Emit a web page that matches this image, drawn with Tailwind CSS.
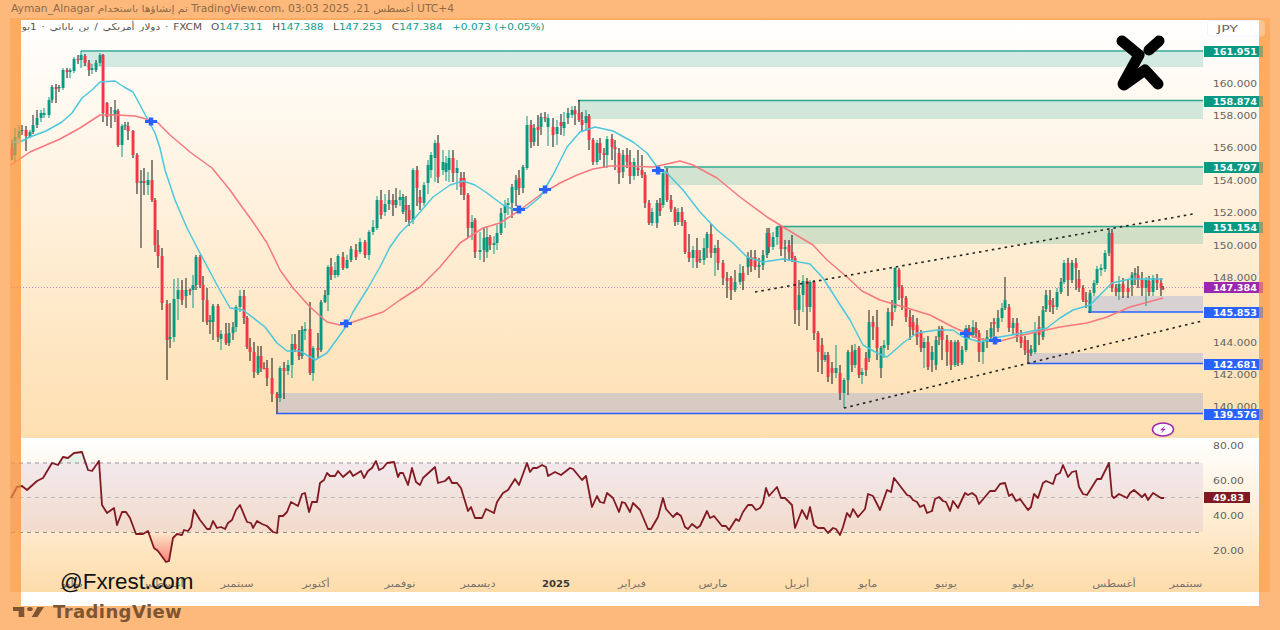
<!DOCTYPE html>
<html lang="ar">
<head>
<meta charset="utf-8">
<title>USDJPY</title>
<script src="https://cdn.jsdelivr.net/npm/@tailwindcss/browser@4"></script>
</head>
<body class="m-0 bg-[#fdb97b]">
<div class="relative w-[1280px] h-[630px] overflow-hidden flex flex-col bg-[#fdb97b] font-['DejaVu_Sans',sans-serif]">
  <!-- top band -->
  <div dir="ltr" class="h-[20px] shrink-0 pl-[11px] text-[10.7px] leading-[18px] text-[#8e6a48] whitespace-nowrap scale-y-[.9]">Ayman_Alnagar تم إنشاؤها باستخدام TradingView.com، 03:03 2025 ,21 أغسطس UTC+4</div>
  <!-- card -->
  <div class="mx-[21px] w-[1238px] h-[586px] shrink-0 bg-white flex flex-col">
    <div class="h-[418px] bg-linear-to-b from-white to-[#fedfb0]">
      <div dir="ltr" class="h-[12px] flex text-[10.5px] leading-[12px] whitespace-nowrap scale-y-[.9]">
        <div class="w-[181px] flex justify-end overflow-hidden text-[#55534f] [word-spacing:1.5px]"><span class="shrink-0">دولار أمريكي / ين ياباني · 1يوم · FXCM</span></div>
        <div class="ml-[9px] flex gap-[9.5px] text-[#0f9d89]">
          <span><span class="text-[#55534f]">O</span>147.311</span>
          <span><span class="text-[#55534f]">H</span>147.388</span>
          <span><span class="text-[#55534f]">L</span>147.253</span>
          <span><span class="text-[#55534f]">C</span>147.384</span>
          <span>+0.073 (+0.05%)</span>
        </div>
      </div>
    </div>
    <div class="h-[154px] bg-linear-to-b from-white to-[#fedcaa]"></div>
    <div class="h-[14px] bg-white"></div>
  </div>
  <!-- bottom band: TradingView mark -->
  <div class="flex items-center gap-[9px] pl-[13px] h-[12px] text-[#7d5532]">
    <svg class="w-[31px] h-[10px] fill-[#7d5532]" viewBox="2 6 33 15" preserveAspectRatio="none"><path d="M14 6H2v6h6v9h6V6Zm14 15h-6l6-15h7l-7 15Z"/><circle cx="20" cy="9" r="3"/></svg>
    <span class="text-[18px] leading-[12px] font-bold tracking-[.4px]">TradingView</span>
  </div>

  <!-- chart drawing -->
  <svg class="absolute left-0 top-0 w-[1280px] h-[630px]" viewBox="0 0 1280 630" fill="none">
    <defs>
      <linearGradient id="os" x1="0" y1="532" x2="0" y2="562" gradientUnits="userSpaceOnUse">
        <stop offset="0" stop-color="#f23645" stop-opacity="0"/>
        <stop offset="1" stop-color="#f23645" stop-opacity=".55"/>
      </linearGradient>
    </defs>
    <!-- zones -->
    <rect x="81" y="52" width="1122" height="15" fill="#089981" fill-opacity=".18"/>
    <rect x="578" y="101" width="625" height="18" fill="#089981" fill-opacity=".18"/>
    <rect x="664" y="168" width="539" height="17" fill="#089981" fill-opacity=".18"/>
    <rect x="777" y="227" width="426" height="17" fill="#089981" fill-opacity=".18"/>
    <rect x="1088" y="296" width="115" height="16" fill="#2962ff" fill-opacity=".18"/>
    <rect x="1028" y="353" width="175" height="10" fill="#2962ff" fill-opacity=".18"/>
    <rect x="276" y="393" width="927" height="20" fill="#2962ff" fill-opacity=".18"/>
    <path d="M81 51H1203M578 100.500H1203M664 167H1203M777 226.500H1203" stroke="#089981" stroke-opacity=".85" stroke-width="1.500"/>
    <path d="M1088 312H1203M1028 363.500H1203M276 413.500H1203" stroke="#2962ff" stroke-width="1.300"/>
    <!-- last price line -->
    <path d="M11 287.500H1203" stroke="#9c27b0" stroke-opacity=".55" stroke-dasharray="1 2"/>

    <g id="candles"></g>

    <!-- moving averages -->
    <polyline stroke="#f7787e" stroke-width="1.500" stroke-linejoin="round" points="11,165 30,152 60,139 80,128 100,115 117,115 135,116 157,122 170,135 190,152 212,168 230,190 237,200 253,222 267,243 280,270 293,288 310,307 327,322 340,325 353,322 383,312 400,300 420,287 440,267 460,243 483,228 500,223 520,210 540,195 560,183 577,175 593,169 610,166 627,166 653,167 667,164 680,161 693,165 717,178 740,197 767,217 793,233 813,245 827,260 847,277 862,291 880,300 907,308 930,315 953,327 977,338 997,342 1023,335 1060,327 1087,323 1107,317 1130,307 1163,298"/>
    <polyline stroke="#4cc8dc" stroke-width="1.500" stroke-linejoin="round" points="11,142 21,141.500 30,137 46,131 62,122 72,113 82,98 92,90 100,82 107,81.500 115,81 124,87 133,92 140,105 148,120 155,133 160,148 165,170 175,200 187,228 200,253 217,285 230,308 243,310 265,327 277,343 287,351 300,351 315,360 327,353 345,328 353,312 368,288 380,267 390,247 400,233 415,218 433,197 450,185 463,181 475,185 487,193 503,205 515,210 527,208 540,197 553,175 567,147 580,132 595,127 613,131 633,142 647,153 657,167 667,173 683,190 700,212 717,230 733,243 747,257 763,262 783,259 810,264 823,278 837,300 850,320 863,345 877,353 887,357 903,343 917,333 937,330 953,330 963,337 980,342 1000,337 1023,333 1047,328 1060,318 1073,310 1090,305 1102,293 1112,283 1130,279 1153,279 1163,279"/>

    <!-- channel lines -->
    <path d="M755 292L1193 214M844 408L1202 321" stroke="#222" stroke-width="1.600" stroke-dasharray="2.500 4"/>

    <!-- crosses -->
    <path d="M145 121.500h12M340 323.500h12M513 209.500h12M539 189.500h12M652 170.500h12M960 333.500h12M989 340.500h12" stroke="#2962ff" stroke-width="3"/>
    <path d="M151 117.500v8M346 319.500v8M519 205.500v8M545 185.500v8M658 166.500v8M966 329.500v8M995 336.500v8" stroke="#2962ff" stroke-width="4.500"/>

    <!-- logo -->
    <g stroke="#000" stroke-width="11" stroke-linecap="round" stroke-linejoin="round">
      <path d="M1122 41L1139 55L1123 84"/>
      <path d="M1159 41L1149 50"/>
      <path d="M1124 85L1145 70L1158 84"/>
    </g>

    <!-- lightning badge -->
    <ellipse cx="1163" cy="429.500" rx="10.500" ry="6.500" fill="#fff" stroke="#9c27b0" stroke-width="1.500"/>
    <path d="M1165.500 425.500L1160 430.200H1163L1160.500 433.500L1166 428.700H1163Z" fill="#9c27b0"/>

    <!-- JPY box -->
    <rect x="1207.500" y="20.500" width="57" height="15.500" rx="3" fill="#fff" fill-opacity=".9" stroke="#f0f3fa"/>

    <!-- axis scale -->
    <g class="font-['DejaVu_Sans',sans-serif] text-[9.500px] fill-[#66625e]" lengthAdjust="spacingAndGlyphs">
      <text x="1217" y="32" textLength="21" lengthAdjust="spacingAndGlyphs">JPY</text>
      <text x="1213" y="86.500" textLength="44" lengthAdjust="spacingAndGlyphs">160.000</text>
      <text x="1213" y="118.500" textLength="44" lengthAdjust="spacingAndGlyphs">158.000</text>
      <text x="1213" y="150.500" textLength="44" lengthAdjust="spacingAndGlyphs">156.000</text>
      <text x="1213" y="183.500" textLength="44" lengthAdjust="spacingAndGlyphs">154.000</text>
      <text x="1213" y="215.500" textLength="44" lengthAdjust="spacingAndGlyphs">152.000</text>
      <text x="1213" y="248.500" textLength="44" lengthAdjust="spacingAndGlyphs">150.000</text>
      <text x="1213" y="280.500" textLength="44" lengthAdjust="spacingAndGlyphs">148.000</text>
      <text x="1213" y="345.500" textLength="44" lengthAdjust="spacingAndGlyphs">144.000</text>
      <text x="1213" y="377.500" textLength="44" lengthAdjust="spacingAndGlyphs">142.000</text>
      <text x="1213" y="409.500" textLength="44" lengthAdjust="spacingAndGlyphs">140.000</text>
      <text x="1213" y="448.500" textLength="31" lengthAdjust="spacingAndGlyphs">80.00</text>
      <text x="1213" y="483.500" textLength="31" lengthAdjust="spacingAndGlyphs">60.00</text>
      <text x="1213" y="518.500" textLength="31" lengthAdjust="spacingAndGlyphs">40.00</text>
      <text x="1213" y="553.500" textLength="31" lengthAdjust="spacingAndGlyphs">20.00</text>
    </g>
    <!-- price labels -->
    <g>
      <rect x="1204" y="46" width="59" height="11" fill="#089981"/>
      <rect x="1204" y="96" width="59" height="11" fill="#089981"/>
      <rect x="1204" y="162" width="59" height="11" fill="#089981"/>
      <rect x="1204" y="222" width="59" height="11" fill="#089981"/>
      <rect x="1204" y="282" width="59" height="11" fill="#9c27b0"/>
      <rect x="1204" y="307" width="59" height="11" fill="#2962ff"/>
      <rect x="1204" y="359" width="59" height="11" fill="#2962ff"/>
      <rect x="1204" y="409" width="59" height="11" fill="#2962ff"/>
      <rect x="1204" y="492" width="46" height="11" fill="#801922"/>
    </g>
    <g class="font-['DejaVu_Sans',sans-serif] text-[9.500px] font-bold fill-white">
      <text x="1213" y="55" textLength="44" lengthAdjust="spacingAndGlyphs">161.951</text>
      <text x="1213" y="105" textLength="44" lengthAdjust="spacingAndGlyphs">158.874</text>
      <text x="1213" y="171" textLength="44" lengthAdjust="spacingAndGlyphs">154.797</text>
      <text x="1213" y="231" textLength="44" lengthAdjust="spacingAndGlyphs">151.154</text>
      <text x="1213" y="291" textLength="44" lengthAdjust="spacingAndGlyphs">147.384</text>
      <text x="1213" y="316" textLength="44" lengthAdjust="spacingAndGlyphs">145.853</text>
      <text x="1213" y="368" textLength="44" lengthAdjust="spacingAndGlyphs">142.681</text>
      <text x="1213" y="418" textLength="44" lengthAdjust="spacingAndGlyphs">139.576</text>
      <text x="1213" y="501" textLength="31" lengthAdjust="spacingAndGlyphs">49.83</text>
    </g>

    <!-- RSI -->
    <rect x="11" y="463" width="1192" height="69" fill="#7e57c2" fill-opacity=".1"/>
    <path d="M11 463H1203M11 532.500H1203" stroke="#787b86" stroke-opacity=".8" stroke-dasharray="4 4"/>
    <path d="M11 497.500H1203" stroke="#787b86" stroke-opacity=".4" stroke-dasharray="4 4"/>
    <polygon fill="url(#os)" points="147,532 148,531 154,548 158,551 166,562 169,561 173,538 175,532"/>
    <polygon fill="#089981" fill-opacity=".1" points="52,463 58,465 63,457 68,458 74,453 82,452 86,463"/>
    <polyline stroke="#801922" stroke-width="1.800" stroke-linejoin="round" points="11,498 17,487 22,486 27,490 37,481 43,478 52,463 58,465 63,457 68,458 74,453 82,452 88,470 92,471 99,461 102,505 107,513 114,508 117,525 122,512 126,512 130,518 136,534 143,534 148,531 154,548 158,551 166,562 169,561 173,538 177,534 182,535 184,530 188,531 191,527 194,510 200,520 207,529 210,529 213,521 217,528 221,527 225,529 228,523 232,520 236,510 240,505 247,522 251,523 253,528 257,521 262,524 267,526 273,532 277,533 279,516 283,516 287,512 291,502 298,506 302,494 305,493 309,512 312,502 317,502 320,483 324,480 327,473 330,476 335,476 338,471 343,477 350,471 353,476 361,471 364,478 368,471 372,468 376,461 379,470 383,468 387,463 394,462 398,477 400,473 403,473 408,485 412,468 416,482 420,485 423,478 435,467 438,483 445,481 449,477 452,483 457,483 461,488 468,511 471,507 475,518 482,518 486,509 494,513 497,502 503,493 508,490 515,479 519,485 527,463 530,472 533,468 537,468 542,465 546,467 548,476 555,472 561,475 570,468 573,469 582,480 586,476 592,507 597,496 600,502 604,503 607,493 613,498 619,512 622,502 625,503 630,512 633,503 640,510 648,529 651,529 658,517 663,498 666,509 673,517 677,513 681,516 685,527 688,529 692,524 697,528 700,526 707,511 710,518 714,516 722,526 726,526 729,530 736,519 739,521 743,512 748,505 752,505 756,510 760,508 763,503 766,488 769,496 777,487 781,498 785,498 792,505 795,528 802,510 807,519 810,507 814,525 818,528 824,528 828,533 833,528 836,529 840,535 843,527 847,513 850,517 853,509 858,517 865,509 868,494 873,496 880,510 887,490 891,492 894,478 907,495 910,496 913,500 917,502 920,507 924,505 927,513 932,511 935,499 939,497 943,501 946,502 950,511 953,501 958,508 965,493 968,495 972,493 976,496 979,504 990,491 995,491 1000,484 1005,483 1009,496 1012,494 1016,501 1020,499 1028,510 1031,507 1034,494 1038,498 1043,483 1046,481 1053,484 1056,475 1060,473 1063,465 1068,477 1072,472 1076,471 1079,487 1083,494 1087,495 1097,479 1101,479 1109,463 1112,496 1114,498 1119,494 1127,498 1130,493 1134,490 1142,497 1145,494 1148,500 1153,493 1161,498 1164,498"/>

    <!-- time axis -->
    <g class="font-['DejaVu_Sans',sans-serif] text-[10px] fill-[#77716b]" text-anchor="middle" direction="rtl" transform="scale(1.15,1)">
      <text x="62.600" y="587">يوليو</text>
      <text x="140.900" y="587">أغسطس</text>
      <text x="206.100" y="587">سبتمبر</text>
      <text x="274.800" y="587">أكتوبر</text>
      <text x="347.800" y="587">نوفمبر</text>
      <text x="415.700" y="587">ديسمبر</text>
      <text x="549.600" y="587">فبراير</text>
      <text x="620" y="587">مارس</text>
      <text x="693" y="587">أبريل</text>
      <text x="754.800" y="587">مايو</text>
      <text x="822.600" y="587">يونيو</text>
      <text x="889.600" y="587">يوليو</text>
      <text x="968.700" y="587">أغسطس</text>
      <text x="1031.300" y="587">سبتمبر</text>
    </g>
    <text x="542" y="586.500" textLength="28" lengthAdjust="spacingAndGlyphs" class="font-['DejaVu_Sans',sans-serif] text-[9.500px] font-bold fill-[#3a3835]">2025</text>

    <!-- watermark -->
    <text x="60" y="589" class="font-['Liberation_Sans',sans-serif] text-[22.400px] fill-[#111]">@Fxrest.com</text>
  </svg>

  <!-- translucent frame over the chart edges -->
  <div class="absolute left-[10px] top-[18px] w-[1260px] h-[574px] border-x-[11px] border-t-[2px] border-[#fca24e]/60"></div>
</div>
<script>
// [x, open, close, high?, low?] in pixel coordinates; gaps are filled between anchors.
var A=[[12,148,156,140,160],[15,155,137,128,162],[19,138,131,125,140],[22,131,130,125,135],[26,130,136,126,151],[30,137,132,130,138],[33,132,125,115,134],[37,125,118,110,128],[41,118,113,110,122],[44,115,113,108,118],[49,115,100,97,118],[52,100,87,85,103],[56,87,89,84,103],[59,88,87,85,92],[63,88,70,68,90],[67,70,72,68,78],[70,72,70,68,78],[74,71,59,57,73],[78,59,60,55,64],[81,60,55,51,68],[85,56,63,54,66],[89,63,70,60,76],[92,70,68,64,74],[96,70,63,60,72],[100,63,55,53,66],[103,55,113,54,122],[107,103,117,102,126],[111,114,115,107,128],[115,115,110,100,122],[118,111,145,109,147],[122,145,126,124,157],[125,126,125,122,130],[128,126,131,122,140],[133,131,155,130,158],[137,155,183,153,194],[141,183,181,170,248],[144,181,183,168,195],[148,185,180,172,195],[152,180,200,160,202],[155,200,245,198,252],[158,245,256,230,268],[162,256,303,248,310],[167,304,340,300,380],[170,339,337,303,348],[174,337,299,279,342],[178,299,290,278,320],[182,290,300,280,305],[186,296,290,278,308],[193,290,285,275,308],[196,285,257,255,290],[200,257,285,255,288],[203,285,300,276,322],[207,300,322,288,325],[210,322,320,315,334],[213,322,306,304,340],[218,306,337,304,342],[221,339,334,330,350],[226,334,343,323,345],[229,343,333,323,346],[233,333,327,322,340],[236,327,307,305,332],[240,307,296,290,312],[244,296,318,290,324],[247,318,347,316,349],[250,347,352,338,361],[254,352,372,342,378],[258,373,356,346,375],[261,356,368,346,372],[267,368,378,360,386],[272,378,394,358,402],[277,394,398,392,413],[280,398,368,366,402],[284,368,371,362,399],[288,371,365,360,375],[292,365,344,334,378],[295,344,349,334,352],[299,349,356,330,360],[302,356,330,326,359],[305,331,329,322,340],[310,329,373,302,375],[313,373,348,346,381],[318,348,350,333,358],[321,350,302,300,352],[325,302,295,290,303],[328,295,267,265,311],[331,267,275,258,280],[335,275,270,262,278],[338,275,256,254,277],[343,257,268,252,270],[347,268,260,255,269],[351,260,249,246,262],[356,250,257,244,260],[360,252,242,238,254],[365,242,255,240,258],[369,255,232,230,260],[373,232,227,220,235],[377,228,200,196,230],[381,200,215,190,219],[385,212,204,194,216],[389,204,200,190,210],[393,200,205,194,216],[396,205,200,188,208],[400,200,197,190,206],[403,212,197,194,214],[406,205,210,196,222],[409,210,220,205,226],[413,220,170,168,224],[417,170,188,166,206],[420,197,203,190,210],[424,203,185,182,206],[428,183,165,160,194],[431,170,155,152,178],[435,158,143,140,182],[438,143,177,135,183],[443,170,162,150,175],[446,172,163,156,181],[449,170,158,150,182],[453,158,173,150,182],[457,173,168,160,190],[461,178,187,172,195],[464,178,195,172,200],[468,195,228,193,237],[472,228,222,215,240],[475,220,252,218,258],[480,252,250,232,260],[484,250,238,228,262],[487,252,237,226,258],[490,237,245,235,250],[494,245,243,236,254],[497,243,233,225,250],[501,233,213,208,235],[505,213,205,200,228],[508,205,203,198,215],[512,203,187,184,218],[516,190,180,175,206],[519,178,188,170,195],[523,188,167,165,193],[527,168,125,116,170],[531,125,142,120,148],[534,142,128,124,146],[538,127,130,115,146],[541,127,117,113,135],[545,117,118,112,122],[548,127,118,114,146],[553,127,135,118,147],[557,134,127,120,145],[561,122,126,114,135],[564,128,122,112,136],[568,118,113,108,124],[572,115,110,106,118],[575,110,114,106,125],[579,113,120,100,122],[582,120,125,112,132],[586,123,116,110,130],[589,116,140,114,150],[593,140,162,138,165],[597,162,143,140,165],[600,143,153,138,160],[604,153,155,148,168],[607,155,139,136,168],[612,139,147,134,160],[615,147,149,140,170],[619,153,173,148,184],[623,172,155,150,178],[627,155,162,148,168],[630,162,176,150,184],[634,176,162,158,180],[638,168,170,150,176],[642,170,175,155,178],[645,175,203,172,208],[649,203,223,200,225],[652,223,212,208,226],[657,223,203,200,228],[660,203,211,198,216],[663,205,173,170,208],[667,173,200,168,202],[671,200,209,195,212],[675,209,222,207,226],[678,222,212,208,225],[682,212,222,207,226],[685,222,252,220,254],[689,252,258,234,262],[693,258,250,246,268],[697,250,262,238,268],[700,260,259,250,263],[704,260,248,238,265],[707,248,234,232,258],[711,234,253,224,258],[715,253,248,245,276],[718,248,263,240,270],[723,263,278,260,285],[727,278,281,272,298],[731,278,290,276,300],[735,290,282,270,292],[740,282,273,264,285],[743,273,281,266,290],[748,267,257,252,275],[751,257,266,250,272],[755,257,267,250,270],[759,267,265,258,278],[763,265,255,250,270],[767,255,233,228,258],[769,233,247,228,253],[773,247,237,232,250],[777,237,227,226,245],[781,227,249,225,256],[785,249,247,240,262],[789,245,252,240,260],[792,252,258,235,262],[795,258,310,256,324],[799,310,295,280,326],[803,295,281,275,312],[807,281,307,278,330],[810,307,282,280,312],[814,282,333,280,340],[818,333,352,331,372],[822,345,360,338,374],[825,360,355,352,362],[828,355,377,352,382],[832,368,373,362,384],[836,373,368,345,378],[840,373,393,365,400],[844,393,380,378,408],[848,380,352,350,395],[852,352,365,345,372],[855,365,350,344,368],[859,348,375,346,378],[862,375,372,368,384],[866,358,370,352,376],[869,358,322,310,362],[873,322,327,316,340],[877,327,348,310,360],[881,368,348,346,378],[884,348,345,340,358],[888,345,312,308,350],[892,312,320,300,326],[895,308,268,267,312],[899,270,287,268,300],[902,287,298,285,310],[906,298,317,296,322],[910,317,327,310,340],[913,322,330,315,335],[917,325,337,318,345],[921,333,348,330,352],[924,348,342,338,368],[928,342,367,336,370],[932,360,352,346,372],[936,365,340,336,370],[939,337,330,326,345],[942,328,340,326,360],[947,340,352,335,366],[951,342,365,340,370],[955,365,342,340,367],[958,342,363,340,366],[962,363,350,346,365],[966,350,328,325,352],[969,328,335,325,338],[973,335,327,320,338],[976,328,333,322,337],[979,333,352,330,362],[983,352,342,338,364],[987,342,337,330,348],[991,337,328,322,342],[994,322,324,318,336],[998,328,318,310,332],[1002,318,308,303,322],[1005,308,300,277,310],[1009,307,328,304,332],[1013,328,323,318,335],[1017,323,337,318,342],[1021,337,343,330,348],[1025,340,350,336,355],[1028,350,353,340,363],[1031,353,349,345,356],[1035,352,332,322,354],[1039,327,335,316,345],[1043,337,310,306,340],[1046,309,295,290,312],[1050,300,305,290,312],[1053,305,307,298,314],[1057,307,292,288,310],[1061,292,282,278,294],[1064,282,263,260,284],[1068,263,280,258,296],[1072,280,263,260,283],[1076,263,268,258,290],[1079,279,288,270,292],[1083,288,300,285,302],[1086,300,302,292,308],[1090,312,293,290,313],[1094,293,283,280,296],[1097,283,269,266,285],[1101,270,268,264,276],[1105,269,253,250,272],[1109,253,233,230,256],[1112,233,288,229,292],[1116,288,292,284,296],[1119,292,284,276,300],[1123,284,292,278,298],[1128,288,292,280,298],[1132,285,275,272,296],[1135,275,273,268,285],[1138,275,280,266,288],[1142,280,288,272,296],[1146,288,280,277,306],[1149,281,292,276,296],[1153,292,278,275,296],[1157,279,283,274,290],[1161,283,288,278,296],[1163,288,288,286,290]];
var s=12345;function r(){s=(s*16807)%2147483647;return s/2147483647;}
var all=[];
for(var i=0;i<A.length;i++){
  all.push(A[i]);
  if(i+1<A.length){
    var dx=A[i+1][0]-A[i][0];
    if(dx>5.5){
      var n=Math.round(dx/3.65)-1,p=A[i][2],q=A[i+1][1];
      for(var k=1;k<=n;k++){
        var a=p+(q-p)*(k-1)/n,b=p+(q-p)*k/n,x=A[i][0]+dx*k/(n+1);
        all.push([x,a,b,Math.min(a,b)-1-r()*5,Math.max(a,b)+1+r()*5]);
      }
    }
  }
}
var NS="http://www.w3.org/2000/svg",g=document.getElementById("candles");
function add(x,y,w,h,f){var e=document.createElementNS(NS,"rect");e.setAttribute("x",x);e.setAttribute("y",y);e.setAttribute("width",w);e.setAttribute("height",h);e.setAttribute("fill",f);g.appendChild(e);}
all.forEach(function(c){
  var x=Math.round(c[0]),top=Math.min(c[1],c[2]),bot=Math.max(c[1],c[2]);
  var up=c[2]<c[1],col=up?"#089981":"#f23645",wick=up?(r()<.6?"#089981":"#222"):"#111";
  add(x-.5,c[3],1,c[4]-c[3],wick);
  add(x-1.4,top,2.9,Math.max(bot-top,1.2),col);
});
</script>
</body>
</html>
